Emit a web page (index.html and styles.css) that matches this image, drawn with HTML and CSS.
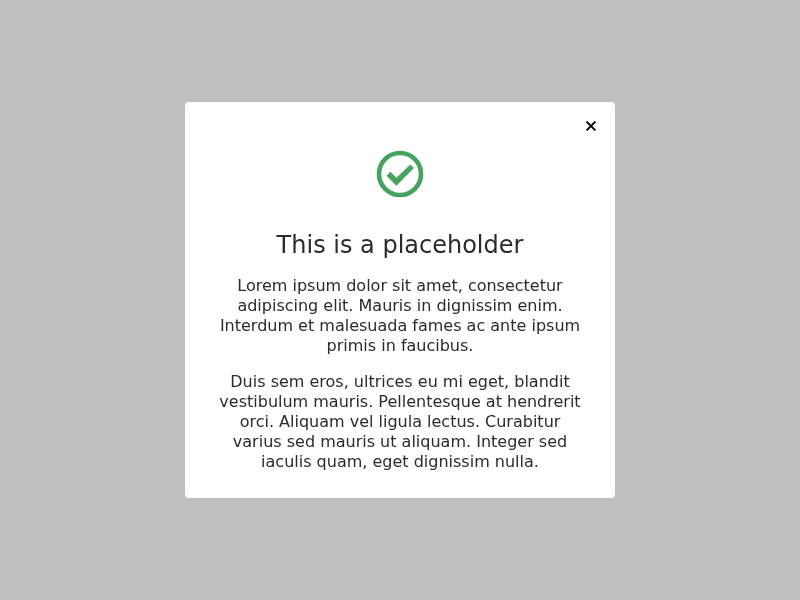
FILE: index.html
```html
<!DOCTYPE html>
<html lang="en">
<head>
<meta charset="utf-8">
<title>Modal</title>
<link rel="stylesheet" href="styles.css">
</head>
<body>
<div class="overlay">
  <div class="modal" role="dialog">
    <button class="close" aria-label="Close"><svg width="12" height="12" viewBox="0 0 12 12"><path d="M1.600 1.600l8.800 8.800M10.400 1.600l-8.800 8.800" stroke="#000" stroke-width="2" fill="none"/></svg></button>
    <svg class="icon" width="48" height="48" viewBox="0 0 48 48"><circle cx="24" cy="24" r="21" fill="none" stroke="#46a35e" stroke-width="4.600"/><path d="M10.500 25.700l3.900-3.900 6 5.900L34.300 14.400l3.700 3.700L20.400 35.700z" fill="#46a35e"/></svg>
    <h2>This is a placeholder</h2>
    <p>Lorem ipsum dolor sit amet, consectetur adipiscing elit. Mauris in dignissim enim. Interdum et malesuada fames ac ante ipsum primis in faucibus.</p>
    <p>Duis sem eros, ultrices eu mi eget, blandit vestibulum mauris. Pellentesque at hendrerit orci. Aliquam vel ligula lectus. Curabitur varius sed mauris ut aliquam. Integer sed iaculis quam, eget dignissim nulla.</p>
  </div>
</div>
</body>
</html>
```
FILE: styles.css
```css
body {
  margin: 0;
  font: 16px/20px "DejaVu Sans", sans-serif;
  color: #2b2b2b;
}
.overlay {
  display: flex;
  align-items: center;
  justify-content: center;
  height: 100vh;
  background: #bfbfbf;
}
.modal {
  position: relative;
  box-sizing: border-box;
  width: 430px;
  height: 396px;
  padding: 48px 32px 0;
  border-radius: 4px;
  background: #fff;
  text-align: center;
  will-change: transform;
}
.close {
  position: absolute;
  top: 18px;
  right: 18px;
  width: 12px;
  height: 12px;
  padding: 0;
  border: 0;
  background: none;
}
.close svg,
.icon {
  display: block;
}
.icon {
  margin: 0 auto;
}
h2 {
  margin: 32px 0 16px;
  font-size: 24px;
  line-height: 30px;
  font-weight: 400;
}
p {
  margin: 0 0 16px;
}
```
